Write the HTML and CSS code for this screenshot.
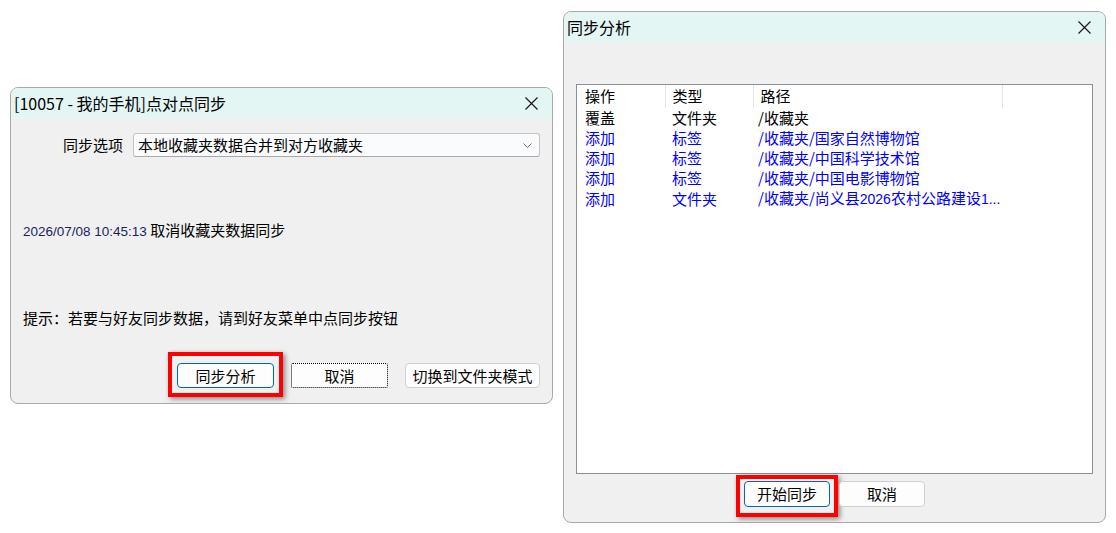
FILE: index.html
```html
<!DOCTYPE html>
<html lang="zh-CN">
<head>
  <meta charset="UTF-8" />
  <title>点对点同步</title>
  <link rel="stylesheet" href="styles.css">
</head>
<body>
  <div class="desk">
    <section class="win win-sync">
      <header class="win-title">
        <span>[10057 - 我的手机]点对点同步</span>
        <svg class="close" width="13" height="13" viewBox="0 0 13 13"><path d="M0.5 0.5 L12.5 12.5 M12.5 0.5 L0.5 12.5" stroke="#1a1a1a" stroke-width="1.2" fill="none"/></svg>
      </header>
      <div class="win-body">
        <div class="opt-row">
          <label>同步选项</label>
          <div class="combo">
            <span>本地收藏夹数据合并到对方收藏夹</span>
            <svg width="9" height="5" viewBox="0 0 9 5"><path d="M0.5 0.5 L4.5 4.5 L8.5 0.5" stroke="#707070" stroke-width="1" fill="none"/></svg>
          </div>
        </div>
        <p class="log"><span class="time">2026/07/08 10:45:13</span> 取消收藏夹数据同步</p>
        <p class="hint">提示：若要与好友同步数据，请到好友菜单中点同步按钮</p>
        <div class="btn-row">
          <button class="btn btn-default mark mark-left">同步分析</button>
          <button class="btn btn-focus">取消</button>
          <button class="btn btn-wide">切换到文件夹模式</button>
        </div>
      </div>
    </section>

    <section class="win win-analyse">
      <header class="win-title">
        <span>同步分析</span>
        <svg class="close" width="13" height="13" viewBox="0 0 13 13"><path d="M0.5 0.5 L12.5 12.5 M12.5 0.5 L0.5 12.5" stroke="#1a1a1a" stroke-width="1.2" fill="none"/></svg>
      </header>
      <div class="win-body">
        <div class="list">
          <table>
            <thead>
              <tr><th class="c1">操作</th><th class="c2">类型</th><th class="c3">路径</th><th></th></tr>
            </thead>
            <tbody>
              <tr><td>覆盖</td><td>文件夹</td><td>/收藏夹</td><td></td></tr>
              <tr class="add"><td>添加</td><td>标签</td><td>/收藏夹/国家自然博物馆</td><td></td></tr>
              <tr class="add"><td>添加</td><td>标签</td><td>/收藏夹/中国科学技术馆</td><td></td></tr>
              <tr class="add"><td>添加</td><td>标签</td><td>/收藏夹/中国电影博物馆</td><td></td></tr>
              <tr class="add"><td>添加</td><td>文件夹</td><td>/收藏夹/尚义县<span class="num">2026</span>农村公路建设<span class="num">1...</span></td><td></td></tr>
            </tbody>
          </table>
        </div>
        <div class="btn-row center">
          <button class="btn btn-default btn-sm mark mark-right">开始同步</button>
          <button class="btn btn-sm">取消</button>
        </div>
      </div>
    </section>
  </div>
</body>
</html>
```

FILE: styles.css
```css
* { box-sizing: border-box; margin: 0; padding: 0; }
body {
  background: #fff;
  color: #000;
  font-family: "Noto Sans CJK SC", "Liberation Sans", sans-serif;
  font-size: 15px;
  width: 1116px;
  height: 533px;
  overflow: hidden;
}
.desk {
  display: flex;
  align-items: flex-start;
  gap: 10px;
  padding-left: 10px;
}
.win {
  width: 543px;
  border: 1px solid #a9a9a9;
  border-radius: 8px;
  background: #f0f0f0;
  overflow: hidden;
  display: flex;
  flex-direction: column;
}
.win-sync { margin-top: 87px; height: 317px; }
.win-analyse { margin-top: 11px; height: 512px; }
.win-title {
  height: 31px;
  flex: none;
  background: #e3f6f4;
  display: flex;
  align-items: center;
  justify-content: space-between;
  padding: 0 14px 1px 3px;
  font-size: 16px;
  line-height: 20px;
}
.close { display: block; }
.win-body {
  flex: 1;
  display: flex;
  flex-direction: column;
  padding: 14px 12px 15px;
}
.win-analyse .win-body { padding: 41px 12px 14px; }
.opt-row {
  display: flex;
  align-items: center;
  justify-content: flex-end;
  gap: 10px;
  height: 24px;
}
.opt-row label { line-height: 20px; }
.combo {
  width: 407px;
  height: 24px;
  background: #fafbfd;
  border: 1px solid #c4c4c4;
  border-bottom-color: #a8a8a8;
  border-radius: 3px;
  display: flex;
  align-items: center;
  justify-content: space-between;
  padding: 0 7px 0 4px;
  line-height: 20px;
}
.log {
  margin-top: 63px;
  line-height: 20px;
}
.time {
  font-family: "Liberation Sans", sans-serif;
  font-size: 13.5px;
  color: #1a1f5c;
}
.hint {
  margin-top: 66px;
  line-height: 20px;
}
.btn-row {
  margin-top: auto;
  display: flex;
  justify-content: flex-end;
  gap: 17px;
}
.btn-row.center {
  justify-content: center;
  gap: 9px;
  margin-top: 7px;
}
.btn {
  position: relative;
  width: 97px;
  height: 25px;
  background: #fdfdfd;
  border: 1px solid #cfcfcf;
  border-radius: 4px;
  font-family: "Noto Sans CJK SC", sans-serif;
  font-size: 15px;
  line-height: 20px;
  color: #000;
}
.btn-default { border-color: #0067c0; }
.btn-focus {
  border: 1px dotted #000;
  border-radius: 2px;
}
.btn-wide { width: 135px; }
.btn-sm { width: 86px; height: 26px; }
.mark::after {
  content: "";
  position: absolute;
  border: 4px solid #ff0000;
  box-shadow: 2px 2px 5px rgba(0, 0, 0, 0.45);
  pointer-events: none;
}
.mark-left::after { top: -12px; left: -10px; right: -10px; bottom: -10px; }
.mark-right::after { top: -7px; left: -9px; right: -9px; bottom: -11px; }
.list {
  height: 390px;
  flex: none;
  background: #fff;
  border: 1px solid #8c9096;
  overflow: hidden;
}
table {
  border-collapse: collapse;
  width: 100%;
  table-layout: fixed;
}
th {
  font-weight: normal;
  text-align: left;
  height: 23px;
  padding: 0 0 1px 7px;
  line-height: 20px;
  border-right: 1px solid #e5e5e5;
}
th:last-child { border-right: none; }
th.c1 { width: 88px; padding-left: 8px; }
th.c2 { width: 88px; }
th.c3 { width: 249px; }
td {
  height: 20px;
  line-height: 20px;
  padding-left: 7px;
  white-space: nowrap;
  overflow: hidden;
}
td:first-child { padding-left: 8px; }
td:nth-child(3) { padding-left: 5px; }
.add td { color: #0000ff; }
.num {
  font-family: "Liberation Sans", sans-serif;
  font-size: 14px;
}
```
